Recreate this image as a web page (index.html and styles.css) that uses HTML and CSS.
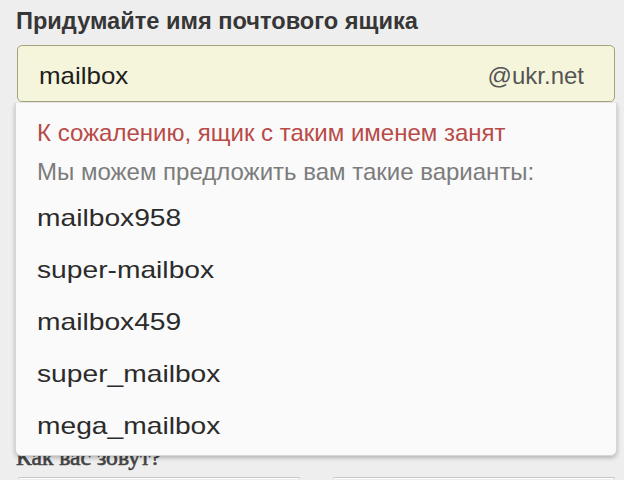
FILE: index.html
```html
<!DOCTYPE html>
<html lang="ru">
<head>
<meta charset="utf-8">
<title>Регистрация</title>
<link rel="stylesheet" href="styles.css">
</head>
<body>
<div class="page">
  <div class="field-label">Придумайте имя почтового ящика</div>
  <div class="field">
    <div class="login-input">
      <span class="login-value">mailbox</span>
      <span class="login-domain">@ukr.net</span>
    </div>
    <div class="suggest">
      <p class="suggest-error">К сожалению, ящик с таким именем занят</p>
      <p class="suggest-hint">Мы можем предложить вам такие варианты:</p>
      <ul class="suggest-list">
        <li class="suggest-item">mailbox958</li>
        <li class="suggest-item">super-mailbox</li>
        <li class="suggest-item">mailbox459</li>
        <li class="suggest-item">super_mailbox</li>
        <li class="suggest-item">mega_mailbox</li>
      </ul>
    </div>
  </div>
  <div class="field-label name-label">Как вас зовут?</div>
  <div class="name-row">
    <div class="name-input"></div>
    <div class="name-input"></div>
  </div>
</div>
</body>
</html>
```

FILE: styles.css
```css
html, body {
  margin: 0;
  padding: 0;
  height: 480px;
  overflow: hidden;
  background: #eeeeee;
}

.page {
  padding: 7px 9px 0 16px;
  font-family: "Liberation Sans", Arial, sans-serif;
  color: #333333;
}

.field-label {
  font-size: 23.6px;
  line-height: 28px;
  font-weight: bold;
  color: #363636;
}

.field {
  position: relative;
  margin: 10px 0 0 1px;
}

.login-input {
  box-sizing: border-box;
  height: 57px;
  display: flex;
  align-items: center;
  justify-content: space-between;
  padding: 4px 30px 0 21px;
  background: #f5f5dc;
  border: 1px solid #a4a37c;
  border-radius: 5px;
}

.login-value {
  display: inline-block;
  font-size: 24px;
  line-height: 28px;
  color: #1e1e1e;
  transform: scaleX(1.08);
  transform-origin: left center;
}

.login-domain {
  font-size: 24px;
  line-height: 28px;
  color: #555555;
}

.suggest {
  position: absolute;
  z-index: 2;
  top: calc(100% + 1px);
  left: -2px;
  right: -2px;
  height: 353px;
  box-sizing: border-box;
  padding: 16px 20px 0 21px;
  background: #fafafa;
  border: 1px solid #d6d6d6;
  border-top: none;
  border-radius: 0 0 6px 6px;
  box-shadow: 0 2px 4px rgba(0, 0, 0, 0.25);
}

.suggest-error,
.suggest-hint {
  margin: 0;
  font-size: 24px;
  line-height: 28px;
}

.suggest-error {
  color: #b84a48;
}

.suggest-hint {
  margin-top: 11px;
  color: #7c7c7c;
}

.suggest-list {
  list-style: none;
  margin: 6px 0 0;
  padding: 0;
}

.suggest-item {
  width: max-content;
  font-size: 24px;
  line-height: 52px;
  color: #2b2b2b;
  transform: scaleX(1.175);
  transform-origin: left center;
}

.name-label {
  margin-top: 341px;
  font-weight: normal;
  font-family: "Liberation Serif", serif;
  color: #444444;
  -webkit-text-stroke: 0.6px #444444;
}

.name-row {
  display: flex;
  gap: 33px;
  margin: 6px 0 0 2px;
}

.name-input {
  width: 280px;
  height: 1px;
  background: #ffffff;
  border: 1px solid #c8c8c8;
  border-bottom: none;
  border-radius: 3px 3px 0 0;
}
```
